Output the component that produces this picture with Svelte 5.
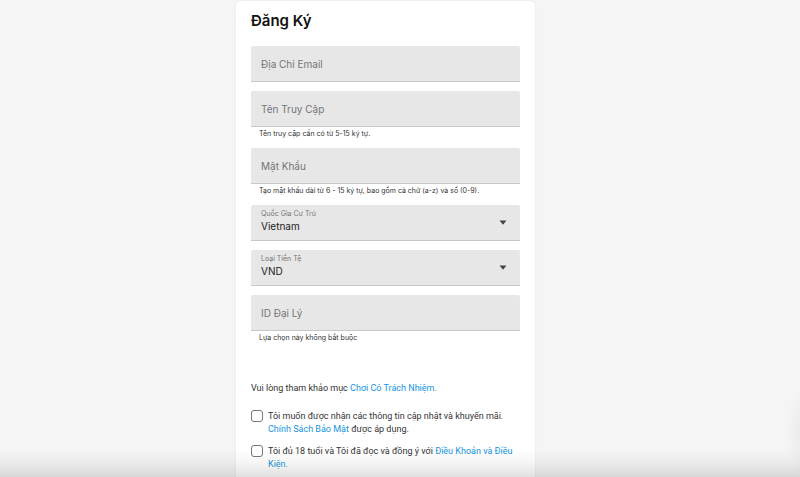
<script lang="ts">
  let email = $state('');
  let username = $state('');
  let password = $state('');
  let country = $state('Vietnam');
  let currency = $state('VND');
  let agentId = $state('');
  let newsletter = $state(false);
  let terms = $state(false);
</script>

<main>
  <form class="card">
    <h1>Đăng Ký</h1>

    <div class="field">
      <div class="box">
        <label for="email" class:filled={email}>Địa Chỉ Email</label>
        <input id="email" type="email" bind:value={email} />
      </div>
    </div>

    <div class="field">
      <div class="box">
        <label for="username" class:filled={username}>Tên Truy Cập</label>
        <input id="username" type="text" bind:value={username} />
      </div>
      <p class="hint">Tên truy cập cần có từ 5-15 ký tự.</p>
    </div>

    <div class="field">
      <div class="box">
        <label for="password" class:filled={password}>Mật Khẩu</label>
        <input id="password" type="password" bind:value={password} />
      </div>
      <p class="hint">Tạo mật khẩu dài từ 6 - 15 ký tự, bao gồm cả chữ (a-z) và số (0-9).</p>
    </div>

    <div class="field">
      <div class="box">
        <label for="country" class="filled">Quốc Gia Cư Trú</label>
        <select id="country" bind:value={country}>
          <option value="Vietnam">Vietnam</option>
          <option value="Thailand">Thailand</option>
        </select>
        <svg class="arrow" viewBox="0 0 8 5" aria-hidden="true"><path d="M0.5 0.5h7L4 4.7z" /></svg>
      </div>
    </div>

    <div class="field">
      <div class="box">
        <label for="currency" class="filled">Loại Tiền Tệ</label>
        <select id="currency" bind:value={currency}>
          <option value="VND">VND</option>
          <option value="USD">USD</option>
        </select>
        <svg class="arrow" viewBox="0 0 8 5" aria-hidden="true"><path d="M0.5 0.5h7L4 4.7z" /></svg>
      </div>
    </div>

    <div class="field">
      <div class="box">
        <label for="agent" class:filled={agentId}>ID Đại Lý</label>
        <input id="agent" type="text" bind:value={agentId} />
      </div>
      <p class="hint">Lựa chọn này không bắt buộc</p>
    </div>

    <p class="notice">Vui lòng tham khảo mục <a href="#responsible">Chơi Có Trách Nhiệm.</a></p>

    <div class="check">
      <input id="newsletter" type="checkbox" bind:checked={newsletter} />
      <label for="newsletter">
        Tôi muốn được nhận các thông tin cập nhật và khuyến mãi.<br />
        <a href="#privacy">Chính Sách Bảo Mật</a> được áp dụng.
      </label>
    </div>

    <div class="check">
      <input id="terms" type="checkbox" bind:checked={terms} />
      <label for="terms">
        Tôi đủ 18 tuổi và Tôi đã đọc và đồng ý với <a href="#terms">Điều Khoản và Điều Kiện.</a>
      </label>
    </div>
  </form>
</main>
<div class="fade"></div>
<div class="side"></div>

<style>
  :global(body) {
    margin: 0;
    background: #f5f5f5;
    font-family: Inter, 'Liberation Sans', sans-serif;
    color: #333;
  }

  main {
    height: 100vh;
    overflow: hidden;
    display: flex;
    justify-content: center;
    align-items: flex-start;
  }

  .card {
    box-sizing: border-box;
    width: 100%;
    max-width: 299px;
    margin-left: -29px;
    padding: 10px 15px 24px;
    background: #fff;
    border-radius: 5px;
    box-shadow: 0 0 3px rgba(0, 0, 0, 0.06);
    margin-top: 1px;
  }

  h1 {
    margin: 0 0 15px;
    font-size: 15px;
    line-height: 20px;
    font-weight: 600;
    color: #111;
  }

  .field {
    margin-bottom: 9px;
  }

  .box {
    display: grid;
    height: 35px;
    background: #e7e7e7;
    border-bottom: 1px solid #c8c8c8;
    border-radius: 2px 2px 0 0;
  }

  .box > * {
    grid-area: 1 / 1;
  }

  .box label {
    padding-left: 10px;
    align-self: center;
    font-size: 10px;
    line-height: 14px;
    color: #757575;
    pointer-events: none;
    z-index: 1;
  }

  .box label.filled {
    align-self: start;
    padding-top: 4px;
    font-size: 7px;
    line-height: 9px;
  }

  .box input,
  .box select {
    box-sizing: border-box;
    width: 100%;
    height: 35px;
    margin: 0;
    padding: 7px 10px 0;
    border: none;
    outline: none;
    background: transparent;
    font-family: inherit;
    font-size: 10px;
    color: #222;
    appearance: none;
  }

  .arrow {
    justify-self: end;
    align-self: center;
    width: 8px;
    height: 5px;
    margin-right: 13px;
    fill: #444;
    pointer-events: none;
  }

  .hint {
    margin: 2px 8px 10px;
    font-size: 7px;
    line-height: 9px;
  }

  .notice {
    margin: 40px 0 15px;
    font-family: Roboto, sans-serif;
    font-size: 9px;
    line-height: 13px;
  }

  a {
    color: #1495e0;
    text-decoration: none;
  }

  .check {
    display: flex;
    align-items: flex-start;
    gap: 5px;
    margin-bottom: 9px;
    font-family: Roboto, sans-serif;
    font-size: 9px;
    line-height: 13px;
  }

  .check input {
    appearance: none;
    flex: none;
    box-sizing: border-box;
    width: 12px;
    height: 12px;
    margin: 0;
    border: 1px solid #777;
    border-radius: 3px;
    background: #fff;
  }

  .check input:checked {
    background: #1495e0;
  }

  /* shadows along the window edges */
  .fade {
    position: fixed;
    inset: auto 0 0;
    height: 28px;
    background: linear-gradient(rgba(0, 0, 0, 0), rgba(0, 0, 0, 0.04) 50%, rgba(0, 0, 0, 0.12));
    pointer-events: none;
  }

  .side {
    position: fixed;
    right: 0;
    bottom: 0;
    width: 14px;
    height: 90px;
    background: radial-gradient(14px 45px at 100% 50%, rgba(0, 0, 0, 0.04), rgba(0, 0, 0, 0));
    pointer-events: none;
  }
</style>
